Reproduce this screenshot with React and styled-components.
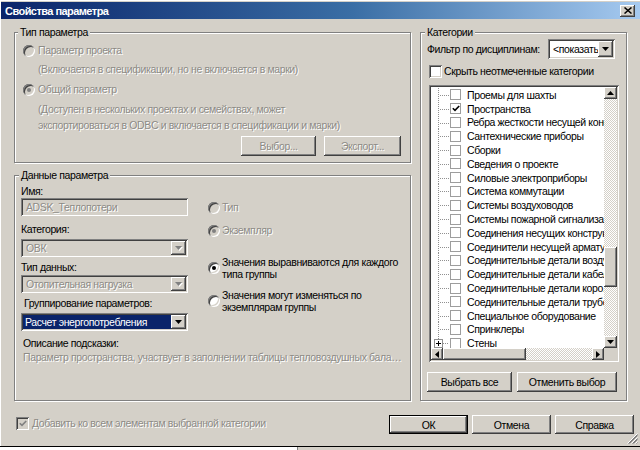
import React from "react";
import styled, { createGlobalStyle, css } from "styled-components";

const GlobalStyle = createGlobalStyle`
  html, body {
    margin: 0;
    padding: 0;
    background: #d4d0c8;
  }
  body {
    font-family: "Liberation Sans", Arial, sans-serif;
    font-size: 10.5px;
    letter-spacing: -0.38px;
    color: #000;
  }
`;

const raised = css`
  background: #d4d0c8;
  box-shadow: inset -1px -1px #404040, inset 1px 1px #fff,
    inset -2px -2px #808080, inset 2px 2px #d4d0c8;
`;

const sunken = css`
  box-shadow: inset 1px 1px #808080, inset -1px -1px #fff,
    inset 2px 2px #404040, inset -2px -2px #d4d0c8;
`;

const engraved = css`
  color: #8d8b86;
  text-shadow: 1px 1px 0 #fff;
`;

const dither = css`
  background-color: #fff;
  background-image: repeating-conic-gradient(#d4d0c8 0 25%, #fff 0 50%);
  background-size: 2px 2px;
`;

const Screen = styled.div`
  width: 640px;
  height: 450px;
  display: flex;
  flex-direction: column;
  overflow: hidden;
`;

const Window = styled.div`
  position: relative;
  height: 446px;
  box-sizing: border-box;
  padding: 2px 0 0 1px;
  display: flex;
  flex-direction: column;
  background: #d4d0c8;
  box-shadow: inset 1px 1px #fff;
`;

const TitleBar = styled.div`
  height: 17px;
  flex: none;
  display: flex;
  align-items: center;
  justify-content: space-between;
  padding: 0 5px 0 4px;
  background: linear-gradient(90deg, #0a246a 0%, #3a6ea5 55%, #a6caf0 100%);
`;

const TitleText = styled.div`
  color: #fff;
  font-weight: bold;
  font-size: 11px;
  letter-spacing: -0.55px;
`;

const CloseBox = styled.div`
  width: 15px;
  height: 12px;
  ${raised};
  display: flex;
  align-items: center;
  justify-content: center;
`;

const Body = styled.div`
  flex: 1;
  display: flex;
  flex-direction: column;
  padding: 6px 0 0 13px;
`;

const TopArea = styled.div`
  display: flex;
  gap: 9px;
`;

const LeftColumn = styled.div`
  width: 397px;
  display: flex;
  flex-direction: column;
  gap: 5px;
`;

const Group = styled.fieldset`
  margin: 0;
  padding: 0;
  min-width: 0;
  box-sizing: border-box;
  width: ${(p) => p.$w}px;
  height: ${(p) => p.$h}px;
  border: 1px solid #808080;
  box-shadow: inset 1px 1px #fff, 1px 1px #fff;
`;

const Legend = styled.legend`
  margin-left: ${(p) => p.$ml ?? 3}px;
  padding: 0 2px;
  line-height: 14px;
  background: #d4d0c8;
`;

const GroupContent = styled.div`
  display: flex;
  flex-direction: column;
  padding: 0 ${(p) => p.$pr ?? 8}px 0 ${(p) => p.$pl ?? 8}px;
`;

const RadioRow = styled.div`
  display: flex;
  align-items: center;
  gap: ${(p) => p.$gap ?? 3}px;
  margin-top: ${(p) => p.$mt || 0}px;
  line-height: ${(p) => p.$lh || 13}px;
  white-space: nowrap;
`;

const RadioCircle = styled.span`
  flex: none;
  width: 12px;
  height: 12px;
  border-radius: 50%;
  background: ${(p) => (p.$disabled ? "#d4d0c8" : "#fff")};
  ${sunken};
  display: flex;
  align-items: center;
  justify-content: center;
  &::after {
    content: "";
    display: ${(p) => (p.$checked ? "block" : "none")};
    width: 4px;
    height: 4px;
    border-radius: 50%;
    background: ${(p) => (p.$disabled ? "#808080" : "#000")};
  }
`;

const OptionText = styled.span`
  ${(p) => p.$disabled && engraved};
`;

const Hint = styled.div`
  padding-left: ${(p) => p.$pl ?? 15}px;
  margin-top: ${(p) => p.$mt || 0}px;
  line-height: ${(p) => p.$lh || 13}px;
  white-space: nowrap;
  ${engraved};
`;

const ButtonRow = styled.div`
  display: flex;
  justify-content: ${(p) => p.$justify || "flex-end"};
  gap: ${(p) => p.$gap ?? 8}px;
  margin-top: ${(p) => p.$mt || 0}px;
`;

const Button = styled.button`
  width: ${(p) => p.$w}px;
  height: ${(p) => p.$h || 20}px;
  margin: 0;
  padding: 0;
  border: none;
  font: inherit;
  letter-spacing: inherit;
  color: #000;
  ${raised};
  ${(p) => p.disabled && engraved};
  ${(p) =>
    p.$default &&
    css`
      box-shadow: inset 0 0 0 1px #000, inset -2px -2px #404040,
        inset 2px 2px #fff, inset -3px -3px #808080;
    `};
`;

const DataColumns = styled.div`
  display: flex;
  gap: 20px;
`;

const FieldColumn = styled.div`
  width: 167px;
  display: flex;
  flex-direction: column;
`;

const OptionColumn = styled.div`
  display: flex;
  flex-direction: column;
`;

const Label = styled.div`
  margin-top: ${(p) => p.$mt || 0}px;
  padding-left: ${(p) => p.$pl || 0}px;
  line-height: 13px;
  white-space: nowrap;
`;

const Field = styled.div`
  width: ${(p) => p.$w}px;
  height: ${(p) => p.$h || 18}px;
  margin-top: ${(p) => p.$mt || 0}px;
  margin-right: ${(p) => p.$mr || 0}px;
  flex: none;
  box-sizing: border-box;
  padding: 2px;
  display: flex;
  background: ${(p) => (p.$disabled ? "#d4d0c8" : "#fff")};
  ${sunken};
`;

const FieldValue = styled.div`
  flex: 1;
  min-width: 0;
  padding-left: 3px;
  display: flex;
  align-items: center;
  white-space: nowrap;
  overflow: hidden;
  ${(p) => p.$disabled && engraved};
  ${(p) =>
    p.$selected &&
    css`
      background: #0a246a;
      color: #fff;
      padding-left: 2px;
    `};
`;

const DropButton = styled.div`
  flex: none;
  width: 15px;
  ${raised};
  display: flex;
  align-items: center;
  justify-content: center;
`;

const Description = styled.div`
  width: 382px;
  margin-top: 1px;
  padding-left: 2px;
  line-height: 13px;
  white-space: nowrap;
  overflow: hidden;
  text-overflow: ellipsis;
  ${engraved};
`;

const OptionBlock = styled.div`
  display: flex;
  align-items: center;
  gap: 2px;
  margin-top: ${(p) => p.$mt || 0}px;
  line-height: 12px;
  white-space: nowrap;
`;

const FilterRow = styled.div`
  height: 20px;
  display: flex;
  align-items: center;
  justify-content: space-between;
  white-space: nowrap;
`;

const CheckRow = styled.div`
  display: flex;
  align-items: center;
  gap: ${(p) => p.$gap ?? 3}px;
  margin-top: ${(p) => p.$mt || 0}px;
  padding-left: ${(p) => p.$pl || 0}px;
  line-height: 13px;
  white-space: nowrap;
`;

const CheckBox = styled.span`
  flex: none;
  width: 13px;
  height: 13px;
  box-sizing: border-box;
  background: ${(p) => (p.$disabled ? "#d4d0c8" : "#fff")};
  ${sunken};
  display: flex;
  align-items: center;
  justify-content: center;
`;

const TreeBox = styled.div`
  width: 190px;
  height: 277px;
  margin: 7px 0 0 2px;
  box-sizing: border-box;
  padding: 2px;
  background: #fff;
  ${sunken};
  display: grid;
  grid-template-columns: 1fr 13px;
  grid-template-rows: 1fr 12px;
`;

const TreeList = styled.div`
  overflow: hidden;
  display: flex;
  flex-direction: column;
  & > :first-child {
    margin-top: 1px;
  }
`;

const TreeRow = styled.div`
  flex: none;
  height: 13.8px;
  display: flex;
  align-items: center;
  white-space: nowrap;
`;

const GuideSvg = styled.svg`
  flex: none;
  display: block;
`;

const TreeCheck = styled.span`
  flex: none;
  width: 11px;
  height: 11px;
  box-sizing: border-box;
  border: 1px solid #9d9d9d;
  background: #fff;
  display: flex;
  align-items: center;
  justify-content: center;
  margin-right: 6px;
`;

const ScrollV = styled.div`
  display: flex;
  flex-direction: column;
`;

const ScrollH = styled.div`
  display: flex;
`;

const ScrollButton = styled.div`
  flex: none;
  width: ${(p) => p.$w || 13}px;
  height: ${(p) => p.$h || 12}px;
  box-sizing: border-box;
  ${raised};
  display: flex;
  align-items: center;
  justify-content: center;
`;

const Track = styled.div`
  ${dither};
  flex: ${(p) => (p.$size ? `0 0 ${p.$size}px` : "1")};
`;

const Thumb = styled.div`
  flex: 0 0 ${(p) => p.$size}px;
  ${raised};
`;

const Corner = styled.div`
  background: #d4d0c8;
`;

const BottomRow = styled.div`
  display: flex;
  justify-content: space-between;
  padding-right: 6px;
`;

const Strip = styled.div`
  flex: 1;
  display: flex;
  border-top: 1px solid #000;
  background: #d4d0c8;
`;

const StripPane = styled.div`
  width: 297px;
  background: #fff;
  border-right: 1px solid #808080;
`;

const Grip = styled.svg`
  position: absolute;
  right: 2px;
  bottom: 2px;
`;

function Arrow({ dir = "down", disabled }) {
  const pts = {
    down: "0,0 7,0 3.5,4",
    up: "0,4 7,4 3.5,0",
    left: "4,0 4,7 0,3.5",
    right: "0,0 0,7 4,3.5",
  }[dir];
  const vertical = dir === "down" || dir === "up";
  return (
    <svg width={vertical ? 7 : 4} height={vertical ? 4 : 7} style={{ display: "block", overflow: "visible" }}>
      {disabled && <polygon points={pts} fill="#fff" transform="translate(1,1)" />}
      <polygon points={pts} fill={disabled ? "#808080" : "#000"} />
    </svg>
  );
}

function Tick({ color = "#000" }) {
  return (
    <svg width="8" height="7" viewBox="0 0 8 7" style={{ display: "block" }}>
      <path d="M0.8 3.2 L3 5.4 L7.2 1" fill="none" stroke={color} strokeWidth="1.6" />
    </svg>
  );
}

function Radio({ checked, disabled, children, mt, gap }) {
  return (
    <RadioRow $mt={mt} $gap={gap}>
      <RadioCircle $checked={checked} $disabled={disabled} />
      <OptionText $disabled={disabled}>{children}</OptionText>
    </RadioRow>
  );
}

function Select({ value, w, disabled, selected, mt, mr, h }) {
  return (
    <Field $w={w} $h={h} $mt={mt} $mr={mr} $disabled={disabled}>
      <FieldValue $disabled={disabled} $selected={selected}>
        {value}
      </FieldValue>
      <DropButton>
        <Arrow disabled={disabled} />
      </DropButton>
    </Field>
  );
}

function TreeGuide({ last }) {
  const dots = { stroke: "#909090", strokeDasharray: "1 1" };
  return (
    <GuideSvg width="19" height="14" viewBox="0 0 19 14">
      {last ? (
        <>
          <line x1="7.5" y1="0" x2="7.5" y2="3" {...dots} />
          <rect x="3.5" y="3.5" width="8" height="8" fill="#fff" stroke="#909090" />
          <line x1="5" y1="7.5" x2="10" y2="7.5" stroke="#000" />
          <line x1="7.5" y1="5" x2="7.5" y2="10" stroke="#000" />
          <line x1="12" y1="7.5" x2="18" y2="7.5" {...dots} />
        </>
      ) : (
        <>
          <line x1="7.5" y1="0" x2="7.5" y2="14" {...dots} />
          <line x1="9" y1="7.5" x2="18" y2="7.5" {...dots} />
        </>
      )}
    </GuideSvg>
  );
}

const categories = [
  ["Проемы для шахты", false],
  ["Пространства", true],
  ["Ребра жесткости несущей конструкции", false],
  ["Сантехнические приборы", false],
  ["Сборки", false],
  ["Сведения о проекте", false],
  ["Силовые электроприборы", false],
  ["Система коммутации", false],
  ["Системы воздуховодов", false],
  ["Системы пожарной сигнализа...", false],
  ["Соединения несущих конструк...", false],
  ["Соединители несущей армату...", false],
  ["Соединительные детали воздуховодов", false],
  ["Соединительные детали кабельных лотков", false],
  ["Соединительные детали коро...", false],
  ["Соединительные детали трубопроводов", false],
  ["Специальное оборудование", false],
  ["Спринклеры", false],
  ["Стены", false],
];

export default function App() {
  return (
    <Screen>
      <GlobalStyle />
      <Window>
        <TitleBar>
          <TitleText>Свойства параметра</TitleText>
          <CloseBox>
            <svg width="8" height="7" viewBox="0 0 8 7" style={{ display: "block" }}>
              <path d="M0.5 0.5 L7.5 6.5 M7.5 0.5 L0.5 6.5" stroke="#000" strokeWidth="1.5" />
            </svg>
          </CloseBox>
        </TitleBar>

        <Body>
          <TopArea>
            <LeftColumn>
              <Group $w={397} $h={138}>
                <Legend $ml={3}>Тип параметра</Legend>
                <GroupContent $pl={8} $pr={9}>
                  <Radio mt={5} disabled>
                    Параметр проекта
                  </Radio>
                  <Hint $mt={6}>(Включается в спецификации, но не включается в марки)</Hint>
                  <Radio mt={7} disabled checked>
                    Общий параметр
                  </Radio>
                  <Hint $mt={5} $lh={16}>
                    (Доступен в нескольких проектах и семействах, может
                    <br />
                    экспортироваться в ODBC и включается в спецификации и марки)
                  </Hint>
                  <ButtonRow $mt={3}>
                    <Button $w={75} disabled>
                      Выбор...
                    </Button>
                    <Button $w={77} disabled>
                      Экспорт...
                    </Button>
                  </ButtonRow>
                </GroupContent>
              </Group>

              <Group $w={397} $h={233}>
                <Legend $ml={4}>Данные параметра</Legend>
                <GroupContent $pl={6} $pr={6}>
                  <DataColumns>
                    <FieldColumn>
                      <Label $mt={3}>Имя:</Label>
                      <Field $w={167} $disabled>
                        <FieldValue $disabled>ADSK_Теплопотери</FieldValue>
                      </Field>
                      <Label $mt={7}>Категория:</Label>
                      <Select w={167} mt={3} value="ОВК" disabled />
                      <Label $mt={4}>Тип данных:</Label>
                      <Select w={167} mt={1} value="Отопительная нагрузка" disabled />
                      <Label $mt={4} $pl={3}>
                        Группирование параметров:
                      </Label>
                      <Select w={167} mt={3} value="Расчет энергопотребления" selected />
                    </FieldColumn>
                    <OptionColumn>
                      <Radio mt={19} gap={2} disabled>
                        Тип
                      </Radio>
                      <Radio mt={10} gap={2} disabled checked>
                        Экземпляр
                      </Radio>
                      <OptionBlock $mt={19}>
                        <RadioCircle $checked />
                        <span>
                          Значения выравниваются для каждого
                          <br />
                          типа группы
                        </span>
                      </OptionBlock>
                      <OptionBlock $mt={9}>
                        <RadioCircle />
                        <span>
                          Значения могут изменяться по
                          <br />
                          экземплярам группы
                        </span>
                      </OptionBlock>
                    </OptionColumn>
                  </DataColumns>
                  <Label $mt={6} $pl={2}>
                    Описание подсказки:
                  </Label>
                  <Description>
                    Параметр пространства, участвует в заполнении таблицы тепловоздушных балансов помещений
                  </Description>
                </GroupContent>
              </Group>
            </LeftColumn>

            <Group $w={207} $h={376}>
              <Legend $ml={4}>Категории</Legend>
              <GroupContent $pl={6} $pr={6}>
                <FilterRow>
                  <span>Фильтр по дисциплинам:</span>
                  <Select w={67} h={20} mr={5} value="<показать все>" />
                </FilterRow>
                <CheckRow $mt={6} $pl={2} $gap={2}>
                  <CheckBox />
                  <span>Скрыть неотмеченные категории</span>
                </CheckRow>
                <TreeBox>
                  <TreeList>
                    {categories.map(([name, checked], i) => (
                      <TreeRow key={name}>
                        <TreeGuide last={i === categories.length - 1} />
                        <TreeCheck>{checked && <Tick />}</TreeCheck>
                        <span>{name}</span>
                      </TreeRow>
                    ))}
                  </TreeList>
                  <ScrollV>
                    <ScrollButton>
                      <Arrow dir="up" />
                    </ScrollButton>
                    <Track $size={148} />
                    <Thumb $size={40} />
                    <Track />
                    <ScrollButton>
                      <Arrow dir="down" />
                    </ScrollButton>
                  </ScrollV>
                  <ScrollH>
                    <ScrollButton $w={12} $h={12}>
                      <Arrow dir="left" />
                    </ScrollButton>
                    <Thumb $size={83} />
                    <Track />
                    <ScrollButton $w={12} $h={12}>
                      <Arrow dir="right" />
                    </ScrollButton>
                  </ScrollH>
                  <Corner />
                </TreeBox>
                <ButtonRow $mt={10} $gap={5} $justify="flex-start">
                  <Button $w={85}>Выбрать все</Button>
                  <Button $w={100}>Отменить выбор</Button>
                </ButtonRow>
              </GroupContent>
            </Group>
          </TopArea>

          <BottomRow>
            <CheckRow $mt={11} $pl={2} $gap={3}>
              <CheckBox $disabled>
                <Tick color="#808080" />
              </CheckBox>
              <OptionText $disabled>Добавить ко всем элементам выбранной категории</OptionText>
            </CheckRow>
            <ButtonRow $mt={14} $gap={4}>
              <Button $w={79} $h={19} $default>
                ОК
              </Button>
              <Button $w={79} $h={19}>
                Отмена
              </Button>
              <Button $w={79} $h={19}>
                Справка
              </Button>
            </ButtonRow>
          </BottomRow>
        </Body>

        <Grip width="11" height="11" viewBox="0 0 11 11">
          {[0, 4, 8].map((o) => (
            <g key={o}>
              <line x1={o + 0.5} y1="10.5" x2="10.5" y2={o + 0.5} stroke="#fff" />
              <line x1={o + 1.5} y1="10.5" x2="10.5" y2={o + 1.5} stroke="#808080" />
              <line x1={o + 2.5} y1="10.5" x2="10.5" y2={o + 2.5} stroke="#808080" />
            </g>
          ))}
        </Grip>
      </Window>
      <Strip>
        <StripPane />
      </Strip>
    </Screen>
  );
}
